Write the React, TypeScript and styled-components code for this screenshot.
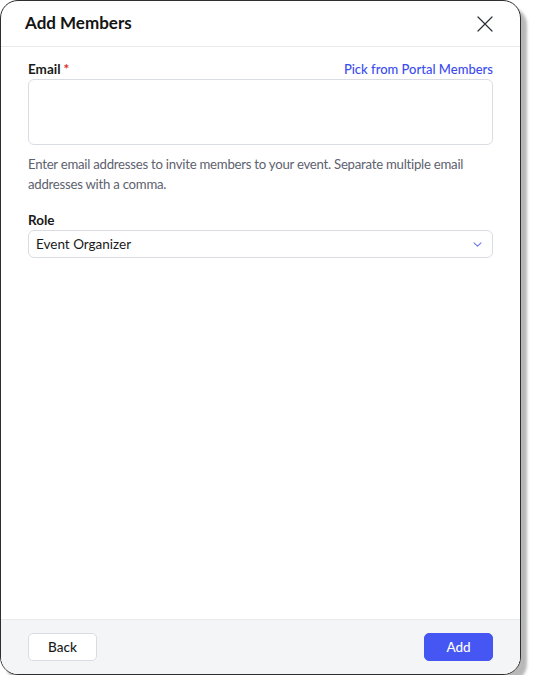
import React from "react"
import styled, { createGlobalStyle } from "styled-components"

const GlobalStyle = createGlobalStyle`
  html, body {
    margin: 0;
    padding: 0;
    background: #fff;
  }
  body {
    font-family: Lato, Inter, "Noto Sans", "Liberation Sans", sans-serif;
    color: #111;
  }
`

const Frame = styled.div`
  box-sizing: border-box;
  width: 521px;
  height: 675px;
  border: 1.5px solid #2e2e2e;
  border-radius: 18px;
  box-shadow: 6px 7px 3px rgba(0, 0, 0, 0.28);
  overflow: hidden;
  display: flex;
  flex-direction: column;
  background: #fff;
`

const Header = styled.div`
  height: 46px;
  flex: none;
  display: flex;
  align-items: center;
  justify-content: space-between;
  padding: 0 26px 3px 24px;
  box-sizing: border-box;
  border-bottom: 1px solid #e9eaee;
`

const Title = styled.h2`
  margin: 0;
  font-size: 17px;
  font-weight: 700;
  color: #141414;
`

const CloseButton = styled.button`
  border: none;
  background: none;
  padding: 0;
  width: 18px;
  height: 18px;
  display: flex;
  cursor: pointer;
  margin-top: 3px;
`

const Body = styled.div`
  flex: 1;
  padding: 14px 27px 0 27px;
  display: flex;
  flex-direction: column;
`

const LabelRow = styled.div`
  display: flex;
  justify-content: space-between;
  align-items: baseline;
  margin-bottom: 1px;
`

const Label = styled.label`
  font-size: 13.5px;
  font-weight: 700;
  color: #1a1a1a;
  line-height: 17px;
`

const Required = styled.span`
  color: #d92b2b;
  margin-left: 3px;
`

const LinkText = styled.a`
  font-size: 13px;
  color: #3b4cf0;
  font-weight: 500;
  text-decoration: none;
  cursor: pointer;
`

const TextArea = styled.textarea`
  box-sizing: border-box;
  width: 100%;
  height: 66px;
  border: 1px solid #d9dce3;
  border-radius: 6px;
  resize: none;
  font-family: inherit;
  font-size: 13px;
  display: block;
  outline: none;
`

const Help = styled.p`
  margin: 10px 0 0;
  font-size: 13.2px;
  letter-spacing: -0.25px;
  line-height: 19.5px;
  color: #5d626e;
`

const Field = styled.div<{ $top: number }>`
  margin-top: ${(p) => p.$top}px;
`

const Select = styled.div`
  box-sizing: border-box;
  height: 28px;
  border: 1px solid #d9dce3;
  border-radius: 6px;
  display: flex;
  align-items: center;
  justify-content: space-between;
  padding: 0 10px 0 7px;
  font-size: 13.5px;
  color: #1a1a1a;
`

const Footer = styled.div`
  height: 55px;
  flex: none;
  box-sizing: border-box;
  background: #f4f5f7;
  border-top: 1px solid #e8e9ec;
  display: flex;
  align-items: center;
  justify-content: space-between;
  padding: 0 27px;
`

const Button = styled.button<{ $primary?: boolean }>`
  box-sizing: border-box;
  width: 69px;
  height: 28px;
  border-radius: 5px;
  font-family: inherit;
  font-size: 13.5px;
  font-weight: 500;
  cursor: pointer;
  border: 1px solid ${(p) => (p.$primary ? "#4556f2" : "#d9dce3")};
  background: ${(p) => (p.$primary ? "#4556f2" : "#fff")};
  color: ${(p) => (p.$primary ? "#fff" : "#1a1a1a")};
`

const App = () => {
  return (
    <>
      <GlobalStyle />
      <Frame>
        <Header>
          <Title>Add Members</Title>
          <CloseButton aria-label="Close">
            <svg width="18" height="18" viewBox="0 0 18 18">
              <path d="M2 2L16 16M16 2L2 16" stroke="#2a2e36" strokeWidth="1.2" strokeLinecap="round" />
            </svg>
          </CloseButton>
        </Header>
        <Body>
          <LabelRow>
            <Label>
              Email<Required>*</Required>
            </Label>
            <LinkText>Pick from Portal Members</LinkText>
          </LabelRow>
          <TextArea />
          <Help>
            Enter email addresses to invite members to your event. Separate multiple email
            addresses with a comma.
          </Help>
          <Field $top={18}>
            <LabelRow>
              <Label>Role</Label>
            </LabelRow>
            <Select>
              <span>Event Organizer</span>
              <svg width="9" height="5" viewBox="0 0 9 5">
                <path d="M1 0.8L4.5 4.2L8 0.8" fill="none" stroke="#6d78f2" strokeWidth="1.1" strokeLinecap="round" strokeLinejoin="round" />
              </svg>
            </Select>
          </Field>
        </Body>
        <Footer>
          <Button>Back</Button>
          <Button $primary>Add</Button>
        </Footer>
      </Frame>
    </>
  )
}

export default App
